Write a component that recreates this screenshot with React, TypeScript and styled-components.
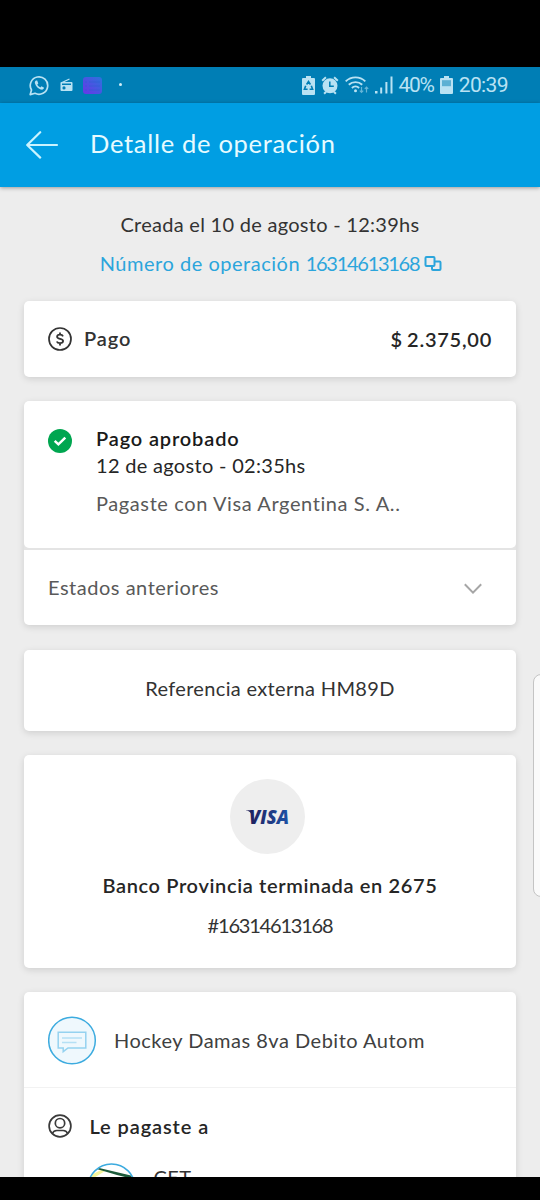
import React from "react";
import styled, { createGlobalStyle } from "styled-components";

const GlobalStyle = createGlobalStyle`
  * { box-sizing: border-box; }
  body { margin: 0; background: #000; font-family: "Lato", "Liberation Sans", sans-serif; }
  svg { display: block; flex: none; }
`;

const Screen = styled.div`
  width: 540px;
  height: 1200px;
  padding: 67px 0 23px;
  background: #000;
  overflow: hidden;
  position: relative;
  display: flex;
  flex-direction: column;
`;

const StatusBar = styled.header`
  flex: none;
  height: 36px;
  padding: 0 32px 0 29px;
  display: flex;
  align-items: center;
  justify-content: space-between;
  background: #007eb5;
  color: #b9e2f3;
`;

const StatusGroup = styled.div<{ $gap: number }>`
  display: flex;
  align-items: center;
  gap: ${(p) => p.$gap}px;
`;

const StatusText = styled.span<{ $track: number }>`
  font: 400 21px/36px "Roboto", sans-serif;
  letter-spacing: ${(p) => p.$track}px;
  white-space: nowrap;
`;

const AppBar = styled.div`
  flex: none;
  height: 84px;
  padding: 0 25px;
  display: flex;
  align-items: center;
  gap: 31px;
  background: #009ee3;
  box-shadow: 0 1px 4px rgba(0, 0, 0, 0.35);
  z-index: 1;
`;

const Title = styled.h1`
  margin: 0;
  padding-bottom: 4px;
  font-size: 25.5px;
  line-height: 30px;
  font-weight: 400;
  letter-spacing: 0.7px;
  color: #e6fbff;
  white-space: nowrap;
`;

const Content = styled.main`
  flex: 1;
  min-height: 0;
  overflow: hidden;
  padding: 25px 24px 0;
  background: #ededed;
`;

const Summary = styled.section`
  display: flex;
  flex-direction: column;
  align-items: center;
  gap: 15px;
  margin-bottom: 26px;
`;

const OperationLink = styled.div`
  display: flex;
  align-items: center;
  padding-left: 2px;
  color: #2ba5dc;
`;

const Text = styled.span<{ $track?: number; $color?: string; $bold?: boolean }>`
  display: block;
  font-size: 20px;
  line-height: 24px;
  font-weight: ${(p) => (p.$bold ? 600 : 400)};
  letter-spacing: ${(p) => p.$track ?? 0.5}px;
  color: ${(p) => p.$color ?? "#333"};
  white-space: pre;
`;

const Amount = styled(Text)`
  word-spacing: -1.5px;
`;

const Card = styled.section`
  background: #fff;
  border-radius: 5px;
  margin-bottom: 24px;
  box-shadow: 0 2px 7px rgba(0, 0, 0, 0.13);
`;

const AmountCard = styled(Card)`
  height: 76px;
  padding: 0 24px 1px;
  display: flex;
  align-items: center;
  justify-content: space-between;
`;

const IconLabel = styled.div<{ $gap: number }>`
  display: flex;
  align-items: center;
  gap: ${(p) => p.$gap}px;
`;

const StatusCard = styled(Card)`
  background: #e4e4e4;
`;

const StatusDetail = styled.div`
  height: 147px;
  padding: 25px 24px 0;
  display: flex;
  gap: 24px;
  background: #fff;
  border-radius: 5px;
`;

const CheckBadge = styled.div`
  padding-top: 3px;
`;

const StatusLines = styled.div`
  display: grid;
  grid-template-rows: 27px 38px 24px;
`;

const HistoryRow = styled.div`
  height: 75px;
  margin-top: 2px;
  padding: 0 34px 0 24px;
  display: flex;
  align-items: center;
  justify-content: space-between;
  background: #fff;
  border-radius: 0 0 5px 5px;
`;

const ReferenceCard = styled(Card)`
  height: 81px;
  margin-top: 25px;
  padding-top: 26px;
  display: flex;
  justify-content: center;
`;

const MethodCard = styled(Card)`
  height: 213px;
  padding-top: 24px;
  display: flex;
  flex-direction: column;
  align-items: center;
`;

const BrandCircle = styled.div`
  width: 75px;
  height: 75px;
  margin: 0 5px 19px 0;
  border-radius: 50%;
  background: #eee;
  display: grid;
  place-items: center;
`;

const CardNumber = styled.div`
  margin-top: 15.5px;
`;

const PayeeCard = styled(Card)`
  height: 260px;
`;

const ConceptRow = styled.div`
  height: 96px;
  padding: 1px 0 0 24px;
  display: flex;
  align-items: center;
  gap: 17px;
  border-bottom: 1px solid #f2f2f2;
`;

const PayeeHeading = styled.div`
  padding: 26px 24px 0;
`;

const HeadingText = styled(Text)`
  margin-top: -1px;
`;

const PayeeRow = styled.div`
  padding: 25px 0 0 63px;
  display: flex;
  gap: 17.5px;
`;

const PayeeName = styled(Text)`
  padding-top: 2px;
`;

const EdgeHandle = styled.div`
  position: absolute;
  top: 674px;
  right: -10px;
  width: 17px;
  height: 223px;
  border: 1.5px solid #c4c4c4;
  border-radius: 8px;
  background: #fafafa;
`;

const WhatsAppIcon = () => (
  <svg width="21" height="21" viewBox="0 0 21 21" fill="none" stroke="currentColor">
    <path d="M1.2 19.6l1.3-4.6A8.7 8.7 0 1 1 6 18.3z" strokeWidth="1.7" strokeLinejoin="round" />
    <path
      d="M7 5.5c-.9.5-1.5 1.500-1 3 .9 2.900 2.900 5 5.800 6 1.700.5 3-.2 3.300-1.700l-2.600-1.500-1.200 1.100c-1.400-.6-2.400-1.600-3-2.900l1-1.100L8.200 5.600z"
      fill="currentColor"
      stroke="none"
    />
  </svg>
);

const RadioIcon = () => (
  <svg width="13" height="14" viewBox="0 0 13 14">
    <path d="M2 4.500L9.500 1" stroke="currentColor" strokeWidth="1.300" />
    <path
      fillRule="evenodd"
      fill="currentColor"
      d="M1.500 4h10a1 1 0 0 1 1 1v7a1 1 0 0 1-1 1h-10a1 1 0 0 1-1-1V5a1 1 0 0 1 1-1zM2 5.500v1.500h9V5.500zM4 8.300a1.600 1.600 0 1 0 0 3.200 1.600 1.600 0 0 0 0-3.200z"
    />
  </svg>
);

const ListAppIcon = () => (
  <svg width="19" height="17" viewBox="0 0 19 17">
    <defs>
      <linearGradient id="listFill" x1="0" y1="1" x2="1" y2="0">
        <stop offset="0" stopColor="#6a35e8" />
        <stop offset="1" stopColor="#2a74dc" />
      </linearGradient>
    </defs>
    <rect width="19" height="17" rx="3" fill="url(#listFill)" />
    <path d="M2 5h2M6 5h11M2 9h2M6 9h11M2 13h2M6 13h11" stroke="#2a5fd0" strokeWidth="1" opacity=".5" />
  </svg>
);

const RecycleBatteryIcon = () => (
  <svg width="13" height="19" viewBox="0 0 13 19">
    <path fill="currentColor" d="M4 0h5v2h3a1 1 0 0 1 1 1v15a1 1 0 0 1-1 1H1a1 1 0 0 1-1-1V3a1 1 0 0 1 1-1h3z" />
    <path
      d="M4.600 8.500L6.500 5.500l1.900 3M9.300 9.800l1.300 3.400H7.600M5.600 13.200H2.400l1.300-3.400"
      fill="none"
      stroke="#007eb5"
      strokeWidth="1.600"
    />
  </svg>
);

const AlarmIcon = () => (
  <svg width="18" height="19" viewBox="0 0 17 19">
    <circle cx="8.500" cy="9.800" r="7.500" fill="currentColor" />
    <path d="M.7 4.700L4.400 1.300M16.300 4.700L12.600 1.300M2.600 17.700l2-2M14.400 17.700l-2-2" stroke="currentColor" strokeWidth="2" />
    <path d="M8.300 5.500v4.800h4" fill="none" stroke="#007eb5" strokeWidth="1.500" />
  </svg>
);

const WifiIcon = () => (
  <svg width="24" height="18" viewBox="0 0 24 18" fill="none" stroke="currentColor">
    <path d="M.7 5.400a14 14 0 0 1 19.600 0M3.800 8.800a9.600 9.600 0 0 1 13.400 0M6.900 12a5.200 5.200 0 0 1 7.200 0" strokeWidth="1.900" />
    <circle cx="10.500" cy="14.700" r="1.500" fill="currentColor" stroke="none" />
    <path d="M16.500 11v5.500M14.800 14.700l1.700 1.800 1.700-1.800M21.500 16.500V11M19.800 12.800l1.700-1.800 1.700 1.800" strokeWidth="1.200" opacity=".55" />
  </svg>
);

const SignalIcon = () => (
  <svg width="18" height="18" viewBox="0 0 18 18" fill="currentColor">
    <path d="M0 15h2.500v2.500H0zM5.200 11.500h2v6h-2zM10.400 6h2v11.500h-2zM15.500.5h2v17h-2z" />
  </svg>
);

const BatteryIcon = () => (
  <svg width="13" height="18" viewBox="0 0 13 18">
    <path fill="currentColor" d="M4 0h5v2h3a1 1 0 0 1 1 1v14a1 1 0 0 1-1 1H1a1 1 0 0 1-1-1V3a1 1 0 0 1 1-1h3z" />
    <path d="M2 4.200h9v6H2z" fill="#5cb0d3" />
  </svg>
);

const NotificationDot = styled.i`
  width: 3px;
  height: 3px;
  margin: 0 0 1px 7px;
  border-radius: 50%;
  background: #d2eef8;
`;

const BackArrow = () => (
  <svg width="34" height="28" viewBox="0 0 34 28" fill="none" stroke="#c9f3ff" strokeWidth="2.200" strokeLinecap="round" strokeLinejoin="round">
    <path d="M32 14H2.200M15.200 1.200L2.200 14l13 12.600" />
  </svg>
);

const CopyIcon = styled.svg`
  margin: 1px 0 0 5px;
`;

const DollarIcon = () => (
  <svg width="24" height="24" viewBox="0 0 24 24" fill="none" stroke="#333" strokeWidth="1.700">
    <circle cx="12" cy="12" r="11" />
    <path d="M15 9.300C14.600 8.300 13.500 7.700 12 7.700c-1.700 0-2.900.8-2.900 2.100 0 3 6 1.300 6 4.300 0 1.300-1.300 2.100-3.100 2.100-1.600 0-2.800-.6-3.200-1.700M12 5.500v2.200M12 16.200v2.200" strokeWidth="1.800" />
  </svg>
);

const CheckIcon = () => (
  <svg width="24" height="24" viewBox="0 0 24 24" fill="none">
    <circle cx="12" cy="12" r="12" fill="#00a650" />
    <path d="M6.700 11.800l3.700 3.500 6.900-6.700" stroke="#fff" strokeWidth="2.500" />
  </svg>
);

const ChevronIcon = () => (
  <svg width="18" height="12" viewBox="0 0 18 12" fill="none" stroke="#a6a6a6" strokeWidth="2">
    <path d="M.8 2.200L9 10.600l8.200-8.400" />
  </svg>
);

const VisaLogo = () => (
  <svg width="48" height="24" viewBox="0 0 48 24">
    <defs>
      <linearGradient id="visaFill" x1="0" x2="1">
        <stop offset="0" stopColor="#1f1f5c" />
        <stop offset="1" stopColor="#1d52a6" />
      </linearGradient>
    </defs>
    <path d="M2 5.200h5.500l1 2.300-1.500 1C6 6.700 4.500 6 2 5.600z" fill="#20205a" />
    <text
      x="5"
      y="19.200"
      textLength="40"
      lengthAdjust="spacingAndGlyphs"
      fontFamily="Open Sans"
      fontSize="19.500"
      fontWeight="800"
      fontStyle="italic"
      fill="url(#visaFill)"
    >
      VISA
    </text>
  </svg>
);

const MessageIcon = () => (
  <svg width="49" height="49" viewBox="0 0 49 49" fill="none">
    <circle cx="24" cy="24.500" r="23.300" fill="#eff8fd" stroke="#3cabdf" strokeWidth="1.500" />
    <path d="M10.200 16.300h27.600v15.600H20l-4.800 3.700v-3.700h-5z" stroke="#95d2f0" strokeWidth="1.500" />
    <path d="M14 22h20M14 26.500h14.500" stroke="#b5e0f5" strokeWidth="1.300" />
  </svg>
);

const PersonIcon = () => (
  <svg width="24" height="24" viewBox="0 0 24 24" fill="none" stroke="#3a3a3a" strokeWidth="1.700">
    <circle cx="12" cy="12" r="10.900" />
    <circle cx="12" cy="9.200" r="4.700" />
    <path d="M4.300 19.700c.7-2.100 2.300-3.200 4.500-3.200h6.400c2.200 0 3.800 1.100 4.500 3.200" />
  </svg>
);

const PayeeAvatar = () => (
  <svg width="49" height="49" viewBox="0 0 49 49">
    <defs>
      <clipPath id="avatarClip">
        <circle cx="24.500" cy="24.500" r="23" />
      </clipPath>
    </defs>
    <g clipPath="url(#avatarClip)">
      <rect width="49" height="49" fill="#fff" />
      <path d="M0 14l14-7 4 1-16 10z" fill="#f5f59a" />
      <path d="M8 4l38 9v3L30 12 8 5.500z" fill="#1c5a3a" />
    </g>
    <circle cx="24.500" cy="24.500" r="23.500" fill="none" stroke="#3cabdf" strokeWidth="1.500" />
  </svg>
);

export default function App() {
  return (
    <Screen>
      <GlobalStyle />
      <StatusBar>
        <StatusGroup $gap={10}>
          <WhatsAppIcon />
          <RadioIcon />
          <ListAppIcon />
          <NotificationDot />
        </StatusGroup>
        <StatusGroup $gap={6}>
          <RecycleBatteryIcon />
          <AlarmIcon />
          <WifiIcon />
          <SignalIcon />
          <StatusText $track={-1.3}>40%</StatusText>
          <BatteryIcon />
          <StatusText $track={-0.6}>20:39</StatusText>
        </StatusGroup>
      </StatusBar>
      <AppBar>
        <BackArrow />
        <Title>Detalle de operación</Title>
      </AppBar>
      <Content>
        <Summary>
          <Text $track={0.28}>Creada el 10 de agosto - 12:39hs</Text>
          <OperationLink>
            <Text $track={0.52} $color="inherit">{"Número de operación "}</Text>
            <Text $track={-1.28} $color="inherit">16314613168</Text>
            <CopyIcon width="18" height="18" viewBox="0 0 18 18" fill="none" stroke="currentColor" strokeWidth="2">
              <rect x="1.500" y="2" width="9" height="9" rx="1" />
              <path d="M10.500 6.500h5a1 1 0 0 1 1 1V14a1 1 0 0 1-1 1H9a1 1 0 0 1-1-1v-3" />
            </CopyIcon>
          </OperationLink>
        </Summary>

        <AmountCard>
          <IconLabel $gap={12}>
            <DollarIcon />
            <HeadingText $bold $track={0.9}>Pago</HeadingText>
          </IconLabel>
          <Amount $bold $track={0.75} $color="#262626">$ 2.375,00</Amount>
        </AmountCard>

        <StatusCard>
          <StatusDetail>
            <CheckBadge>
              <CheckIcon />
            </CheckBadge>
            <StatusLines>
              <Text $bold $track={0.85} $color="#1a1a1a">Pago aprobado</Text>
              <Text $track={0.31} $color="#262626">12 de agosto - 02:35hs</Text>
              <Text $track={0.6} $color="#595959">Pagaste con Visa Argentina S. A..</Text>
            </StatusLines>
          </StatusDetail>
          <HistoryRow>
            <HeadingText $track={0.52} $color="#595959">Estados anteriores</HeadingText>
            <ChevronIcon />
          </HistoryRow>
        </StatusCard>

        <ReferenceCard>
          <Text $track={0.34}>Referencia externa HM89D</Text>
        </ReferenceCard>

        <MethodCard>
          <BrandCircle>
            <VisaLogo />
          </BrandCircle>
          <Text $bold $track={0.64} $color="#262626">Banco Provincia terminada en 2675</Text>
          <CardNumber>
            <Text $track={-1.2}>#16314613168</Text>
          </CardNumber>
        </MethodCard>

        <PayeeCard>
          <ConceptRow>
            <MessageIcon />
            <Text $track={0.5} $color="#404040">Hockey Damas 8va Debito Autom</Text>
          </ConceptRow>
          <PayeeHeading>
            <IconLabel $gap={17.5}>
              <PersonIcon />
              <HeadingText $bold $track={0.9} $color="#262626">Le pagaste a</HeadingText>
            </IconLabel>
          </PayeeHeading>
          <PayeeRow>
            <PayeeAvatar />
            <PayeeName $track={0.4}>CET</PayeeName>
          </PayeeRow>
        </PayeeCard>
      </Content>
      <EdgeHandle />
    </Screen>
  );
}
